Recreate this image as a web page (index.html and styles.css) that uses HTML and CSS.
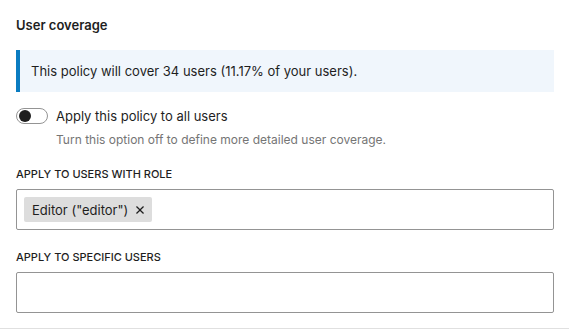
FILE: index.html
```html
<!DOCTYPE html>
<html lang="en">
<head>
<meta charset="utf-8">
<title>User coverage</title>
<link rel="stylesheet" href="styles.css">
</head>
<body>
<section class="panel">
  <h2 class="panel-title">User coverage</h2>
  <div class="notice">This policy will cover 34 users (11.17% of your users).</div>
  <div class="toggle-field">
    <div class="toggle-row">
      <span class="toggle"><span class="toggle-knob"></span></span>
      <span class="toggle-label">Apply this policy to all users</span>
    </div>
    <p class="help">Turn this option off to define more detailed user coverage.</p>
  </div>
  <div class="field">
    <div class="field-label">Apply to users with role</div>
    <div class="token-input">
      <span class="token">
        <span class="token-text">Editor ("editor")</span>
        <svg class="token-remove" viewBox="0 0 24 24" width="20" height="20" aria-hidden="true"><path d="M12 13.06l3.712 3.713 1.061-1.06L13.061 12l3.712-3.712-1.06-1.06L12 10.938 8.288 7.227l-1.061 1.06L10.939 12l-3.712 3.712 1.06 1.061L12 13.061z"/></svg>
      </span>
    </div>
  </div>
  <div class="field">
    <div class="field-label">Apply to specific users</div>
    <div class="token-input"></div>
  </div>
</section>
</body>
</html>
```

FILE: styles.css
```css
html, body {
  margin: 0;
  padding: 0;
  background: #ffffff;
}

body {
  font-family: Inter, "Noto Sans", sans-serif;
  color: #1e1e1e;
  font-size: 13px;
}

.panel {
  box-sizing: border-box;
  height: 329px;
  padding: 16px 15px 0 16px;
  border-bottom: 1px solid #e0e0e0;
}

.panel-title {
  margin: 0;
  font-size: 13px;
  font-weight: 600;
  line-height: 18px;
}

.notice {
  margin-top: 16px;
  height: 42px;
  box-sizing: border-box;
  display: flex;
  align-items: center;
  padding: 0 12px 0 11px;
  background: #f0f6fc;
  border-left: 4px solid #0a7cc1;
  font-size: 13px;
  line-height: 18px;
}

.toggle-field {
  margin-top: 16px;
}

.toggle-row {
  display: flex;
  align-items: center;
  gap: 8px;
  height: 16px;
}

.toggle {
  box-sizing: border-box;
  width: 32px;
  height: 16px;
  border: 1px solid #949494;
  border-radius: 8px;
  display: flex;
  align-items: center;
  padding-left: 2px;
  flex-shrink: 0;
}

.toggle-knob {
  width: 12px;
  height: 12px;
  border-radius: 50%;
  background: #1e1e1e;
}

.toggle-label {
  font-size: 13px;
  line-height: 16px;
}

.help {
  margin: 8px 0 0 40px;
  font-size: 12px;
  line-height: 16px;
  color: #757575;
}

.field {
  margin-top: 18px;
}

.field + .field {
  margin-top: 19px;
}

.field-label {
  font-size: 11px;
  line-height: 16px;
  text-transform: uppercase;
  font-weight: 500;
}

.token-input {
  margin-top: 7px;
  box-sizing: border-box;
  height: 41px;
  border: 1px solid #949494;
  border-radius: 2px;
  padding: 7px;
  display: flex;
  align-items: flex-start;
}

.token {
  display: flex;
  align-items: center;
  height: 25px;
  background: #dddddd;
  border-radius: 2px;
  padding: 0 2px 0 8px;
  gap: 2px;
}

.token-text {
  font-size: 13px;
  line-height: 16px;
}

.token-remove {
  fill: #1e1e1e;
  display: block;
}
```
